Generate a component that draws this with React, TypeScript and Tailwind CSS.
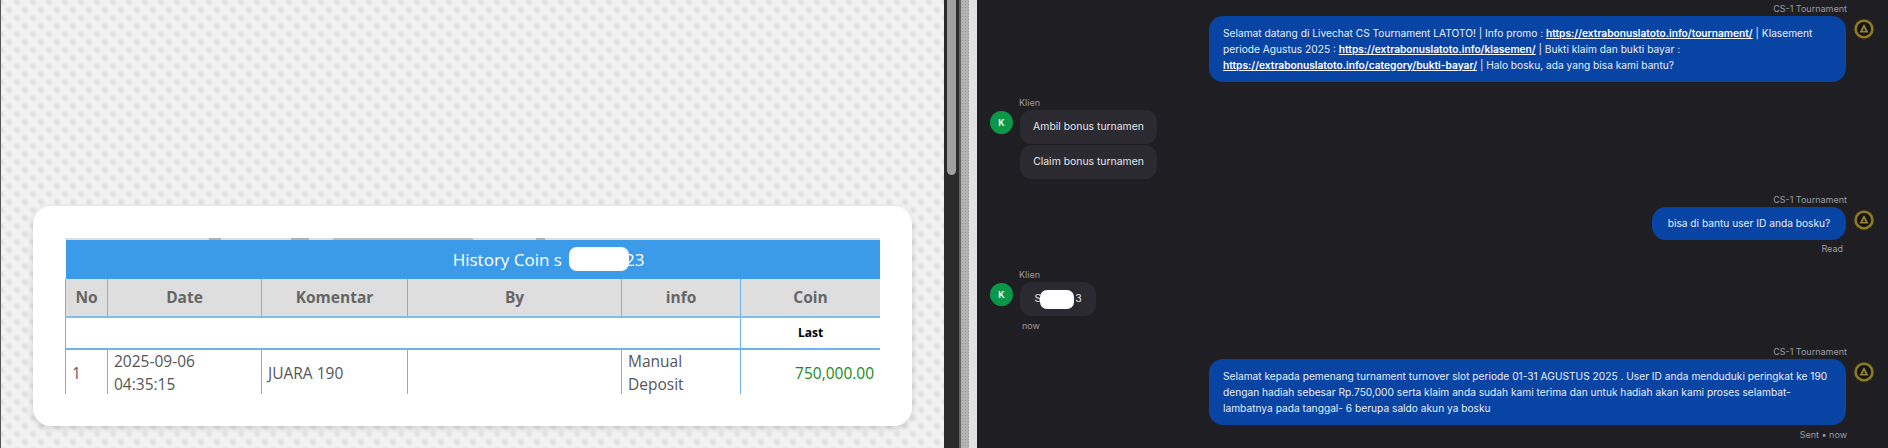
import React from "react";

const sans = "font-['Inter',sans-serif]";

function Avatar() {
  return (
    <svg width="22" height="24" viewBox="0 0 22 24" className="mt-[1px] shrink-0 blur-[0.4px]">
      <circle cx="11" cy="12" r="10.5" fill="#2f2a14" />
      <circle cx="11" cy="12" r="8.4" fill="none" stroke="#8f7b28" strokeWidth="2.4" />
      <circle cx="11" cy="12" r="6.6" fill="#141416" />
      <path d="M11 7 L15.5 15.5 H6.5 Z M11 10.8 L9.6 14 H12.4 Z" fill="#96822f" fillRule="evenodd" />
    </svg>
  );
}

function AgentMsg({ children, width, mt, h }: { children: React.ReactNode; width: string; mt: string; h: string }) {
  return (
    <div className={mt}>
      <div className="h-[14px] pr-[41px] text-right text-[9px] leading-[14px] text-[#9b9ba3]">CS-1 Tournament</div>
      <div className="flex items-start justify-end gap-[7px] pr-[13px]">
        <div className={`${width} ${h} rounded-[14px] bg-[#0844a4] px-[14px] pb-[1px] text-[10.2px] leading-[16px] text-[#e8edf7] flex items-center`}>
          <div className="w-full">{children}</div>
        </div>
        <Avatar />
      </div>
    </div>
  );
}

function ClientBubble({ children, width }: { children: React.ReactNode; width: string }) {
  return (
    <div className={`${width} h-[34px] rounded-[12px] bg-[#2a2a30] flex items-center justify-center text-[10.4px] text-[#e4e4e8]`}>
      {children}
    </div>
  );
}

function KAvatar() {
  return (
    <div className="h-[23px] w-[23px] shrink-0 rounded-full bg-[#0a9748] flex items-center justify-center text-[9px] font-semibold text-white">
      K
    </div>
  );
}

const L = ({ children }: { children: React.ReactNode }) => (
  <a className="font-semibold text-white underline">{children}</a>
);

const th = "border-x border-[#6db3ee] bg-[#dedede] text-center align-middle text-[15.5px] font-bold text-[#666666] h-[38px]";
const td = "border-x border-[#6db3ee] align-middle text-[15.5px] leading-[23px] px-[6px]";

export default function App() {
  return (
    <div className={`flex h-[448px] w-[1888px] overflow-hidden bg-[#1f1f23] ${sans}`}>
      <div className="h-full w-[944px] shrink-0 border-l border-[#555555] bg-[#ebebeb] bg-[radial-gradient(circle,#dadada_0,transparent_4px),radial-gradient(circle,#dcdcdc_0,transparent_4px),linear-gradient(45deg,transparent_0,#f3f3f3_5.65px,transparent_11.31px,#f3f3f3_16.97px,transparent_22.63px),linear-gradient(135deg,transparent_0,#f3f3f380_5.65px,transparent_11.31px,#f3f3f380_16.97px,transparent_22.63px)] bg-size-[16px_16px] bg-position-[0_2px,8px_10px,0_2px,0_2px] pl-[32px] pt-[206px]">
        <div className="h-[220px] w-[879px] rounded-[18px] bg-white p-[32px] shadow-[0_2px_6px_rgba(0,0,0,0.15)]">
          <div className="h-[156px] overflow-hidden font-['Open_Sans',sans-serif]">
            <div className="h-[2px] bg-[linear-gradient(90deg,#dddddd_0_144px,#b0b0b0_144px_156px,#dddddd_156px_226px,#b0b0b0_226px_244px,#dddddd_244px_268px,#bdbdbd_268px_408px,#dddddd_408px_471px,#b0b0b0_471px_480px,#dddddd_480px)]" />
            <table className="w-[815px] table-fixed border-collapse">
              <colgroup>
                <col className="w-[42px]" />
                <col className="w-[154px]" />
                <col className="w-[146px]" />
                <col className="w-[214px]" />
                <col className="w-[119px]" />
                <col className="w-[140px]" />
              </colgroup>
              <thead>
                <tr>
                  <th colSpan={6} className="h-[39px] bg-[#3c9be9] pl-[151px] text-center text-[17px] font-normal text-white">
                    <span className="relative inline-block">
                      History Coin s<span className="inline-block w-[63px]" />23
                      <span className="absolute left-[116px] top-[0px] h-[24px] w-[60px] rounded-[8px] bg-white" />
                    </span>
                  </th>
                </tr>
                <tr className="border-b-2 border-[#7fbdf0]">
                  <th className={th}>No</th>
                  <th className={th}>Date</th>
                  <th className={th}>Komentar</th>
                  <th className={th}>By</th>
                  <th className={th}>info</th>
                  <th className={th}>Coin</th>
                </tr>
              </thead>
              <tbody>
                <tr className="h-[32px] border-b-2 border-[#6db3ee]">
                  <td colSpan={5} className="border-l border-[#6db3ee]" />
                  <td className="border-x border-[#6db3ee] text-center text-[12px] font-bold text-black">Last</td>
                </tr>
                <tr>
                  <td className={`${td} text-[#555555]`}>1</td>
                  <td className={`${td} text-[#555555]`}>2025-09-06 04:35:15</td>
                  <td className={`${td} text-[#555555]`}>JUARA 190</td>
                  <td className={td} />
                  <td className={`${td} text-[#555555]`}>Manual Deposit</td>
                  <td className={`${td} text-right text-[#1a8a1a]`}>750,000.00</td>
                </tr>
              </tbody>
            </table>
          </div>
        </div>
      </div>

      <div className="h-full w-[15px] shrink-0 bg-[#2b2b2b] px-[3px]">
        <div className="h-[175px] w-[9px] rounded-b-[5px] bg-[#a0a0a0]" />
      </div>
      <div className="h-full w-[2px] shrink-0 bg-[#666666]" />
      <div className="h-full w-[8px] shrink-0 bg-[#b4b4b4] bg-[radial-gradient(circle,#9a9a9a_1px,transparent_1px)] bg-size-[3px_3px]" />
      <div className="h-full w-[8px] shrink-0 bg-[#e2e2e2]" />

      <div className="flex-1 bg-[#1f1f23] pt-[2px]">
        <AgentMsg width="w-[637px]" h="h-[66px]" mt="">
          Selamat datang di Livechat CS Tournament LATOTO! | Info promo : <L>https://extrabonuslatoto.info/tournament/</L> | Klasement
          periode Agustus 2025 : <L>https://extrabonuslatoto.info/klasemen/</L> | Bukti klaim dan bukti bayar :{" "}
          <L>https://extrabonuslatoto.info/category/bukti-bayar/</L> | Halo bosku, ada yang bisa kami bantu?
        </AgentMsg>

        <div className="mt-[14px] pl-[13px]">
          <div className="h-[14px] pl-[29px] text-[9px] leading-[14px] text-[#9b9ba3]">Klien</div>
          <div className="flex items-start gap-[7px]">
            <div className="mt-[1px]"><KAvatar /></div>
            <div className="flex flex-col gap-[1px]">
              <ClientBubble width="w-[137px]">Ambil bonus turnamen</ClientBubble>
              <ClientBubble width="w-[137px]">Claim bonus turnamen</ClientBubble>
            </div>
          </div>
        </div>

        <AgentMsg width="w-[194px]" h="h-[33px]" mt="mt-[14px]">
          <span className="block text-center">bisa di bantu user ID anda bosku?</span>
        </AgentMsg>
        <div className="mt-[2px] h-[14px] pr-[45px] text-right text-[9px] leading-[14px] text-[#9b9ba3]">Read</div>

        <div className="mt-[12px] pl-[13px]">
          <div className="h-[14px] pl-[29px] text-[9px] leading-[14px] text-[#9b9ba3]">Klien</div>
          <div className="flex items-start gap-[7px]">
            <div className="mt-[1px]"><KAvatar /></div>
            <div className="relative">
              <ClientBubble width="w-[76px]">
                <span>S<span className="inline-block w-[34px]" />3</span>
              </ClientBubble>
              <div className="absolute left-[20px] top-[8px] h-[19px] w-[34px] rounded-[7px] bg-white" />
            </div>
          </div>
          <div className="mt-[3px] h-[14px] pl-[32px] text-[9px] leading-[14px] text-[#9b9ba3]">now</div>
        </div>

        <AgentMsg width="w-[637px]" h="h-[66px]" mt="mt-[12px]">
          Selamat kepada pemenang turnament turnover slot periode 01-31 AGUSTUS 2025 . User ID anda menduduki peringkat ke 190
          dengan hadiah sebesar Rp.750,000 serta klaim anda sudah kami terima dan untuk hadiah akan kami proses selambat-
          lambatnya pada tanggal- 6 berupa saldo akun ya bosku
        </AgentMsg>
        <div className="mt-[3px] h-[14px] pr-[41px] text-right text-[9px] leading-[14px] text-[#9b9ba3]">Sent • now</div>
      </div>
    </div>
  );
}
